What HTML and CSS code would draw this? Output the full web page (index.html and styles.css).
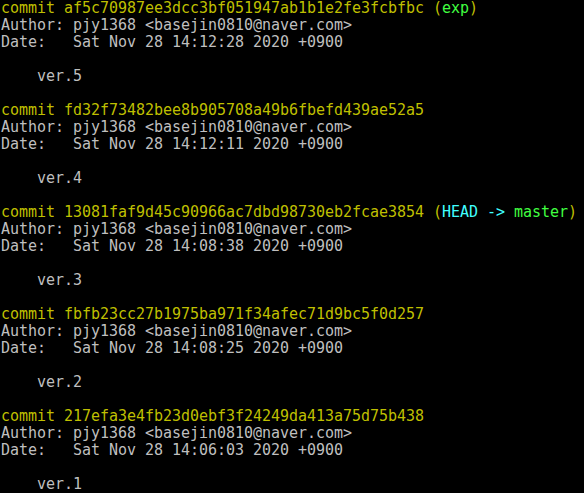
FILE: index.html
```html
<!DOCTYPE html>
<html>
<head>
<meta charset="utf-8">
<link rel="stylesheet" href="styles.css">
</head>
<body>
<pre class="term"><span class="y">commit af5c70987ee3dcc3bf051947ab1b1e2fe3fcbfbc (<span class="g">exp</span>)</span>
Author: pjy1368 &lt;basejin0810@naver.com&gt;
Date:   Sat Nov 28 14:12:28 2020 +0900

    ver.5

<span class="y">commit fd32f73482bee8b905708a49b6fbefd439ae52a5</span>
Author: pjy1368 &lt;basejin0810@naver.com&gt;
Date:   Sat Nov 28 14:12:11 2020 +0900

    ver.4

<span class="y">commit 13081faf9d45c90966ac7dbd98730eb2fcae3854 (<span class="c">HEAD -&gt; </span><span class="g">master</span>)</span>
Author: pjy1368 &lt;basejin0810@naver.com&gt;
Date:   Sat Nov 28 14:08:38 2020 +0900

    ver.3

<span class="y">commit fbfb23cc27b1975ba971f34afec71d9bc5f0d257</span>
Author: pjy1368 &lt;basejin0810@naver.com&gt;
Date:   Sat Nov 28 14:08:25 2020 +0900

    ver.2

<span class="y">commit 217efa3e4fb23d0ebf3f24249da413a75d75b438</span>
Author: pjy1368 &lt;basejin0810@naver.com&gt;
Date:   Sat Nov 28 14:06:03 2020 +0900

    ver.1</pre>
</body>
</html>
```
FILE: styles.css
```css
html, body {
  margin: 0;
  padding: 0;
  background: #000;
  width: 584px;
  height: 493px;
  overflow: hidden;
}
.term {
  margin: 0;
  padding: 0 0 0 1px;
  font-family: "DejaVu Sans Mono", "Liberation Mono", monospace;
  font-size: 15px;
  letter-spacing: -0.03px;
  line-height: 17px;
  color: #bfbfbf;
  white-space: pre;
}
.y { color: #bfbf00; }
.g { color: #40ff40; }
.c { color: #40ffff; }
```
